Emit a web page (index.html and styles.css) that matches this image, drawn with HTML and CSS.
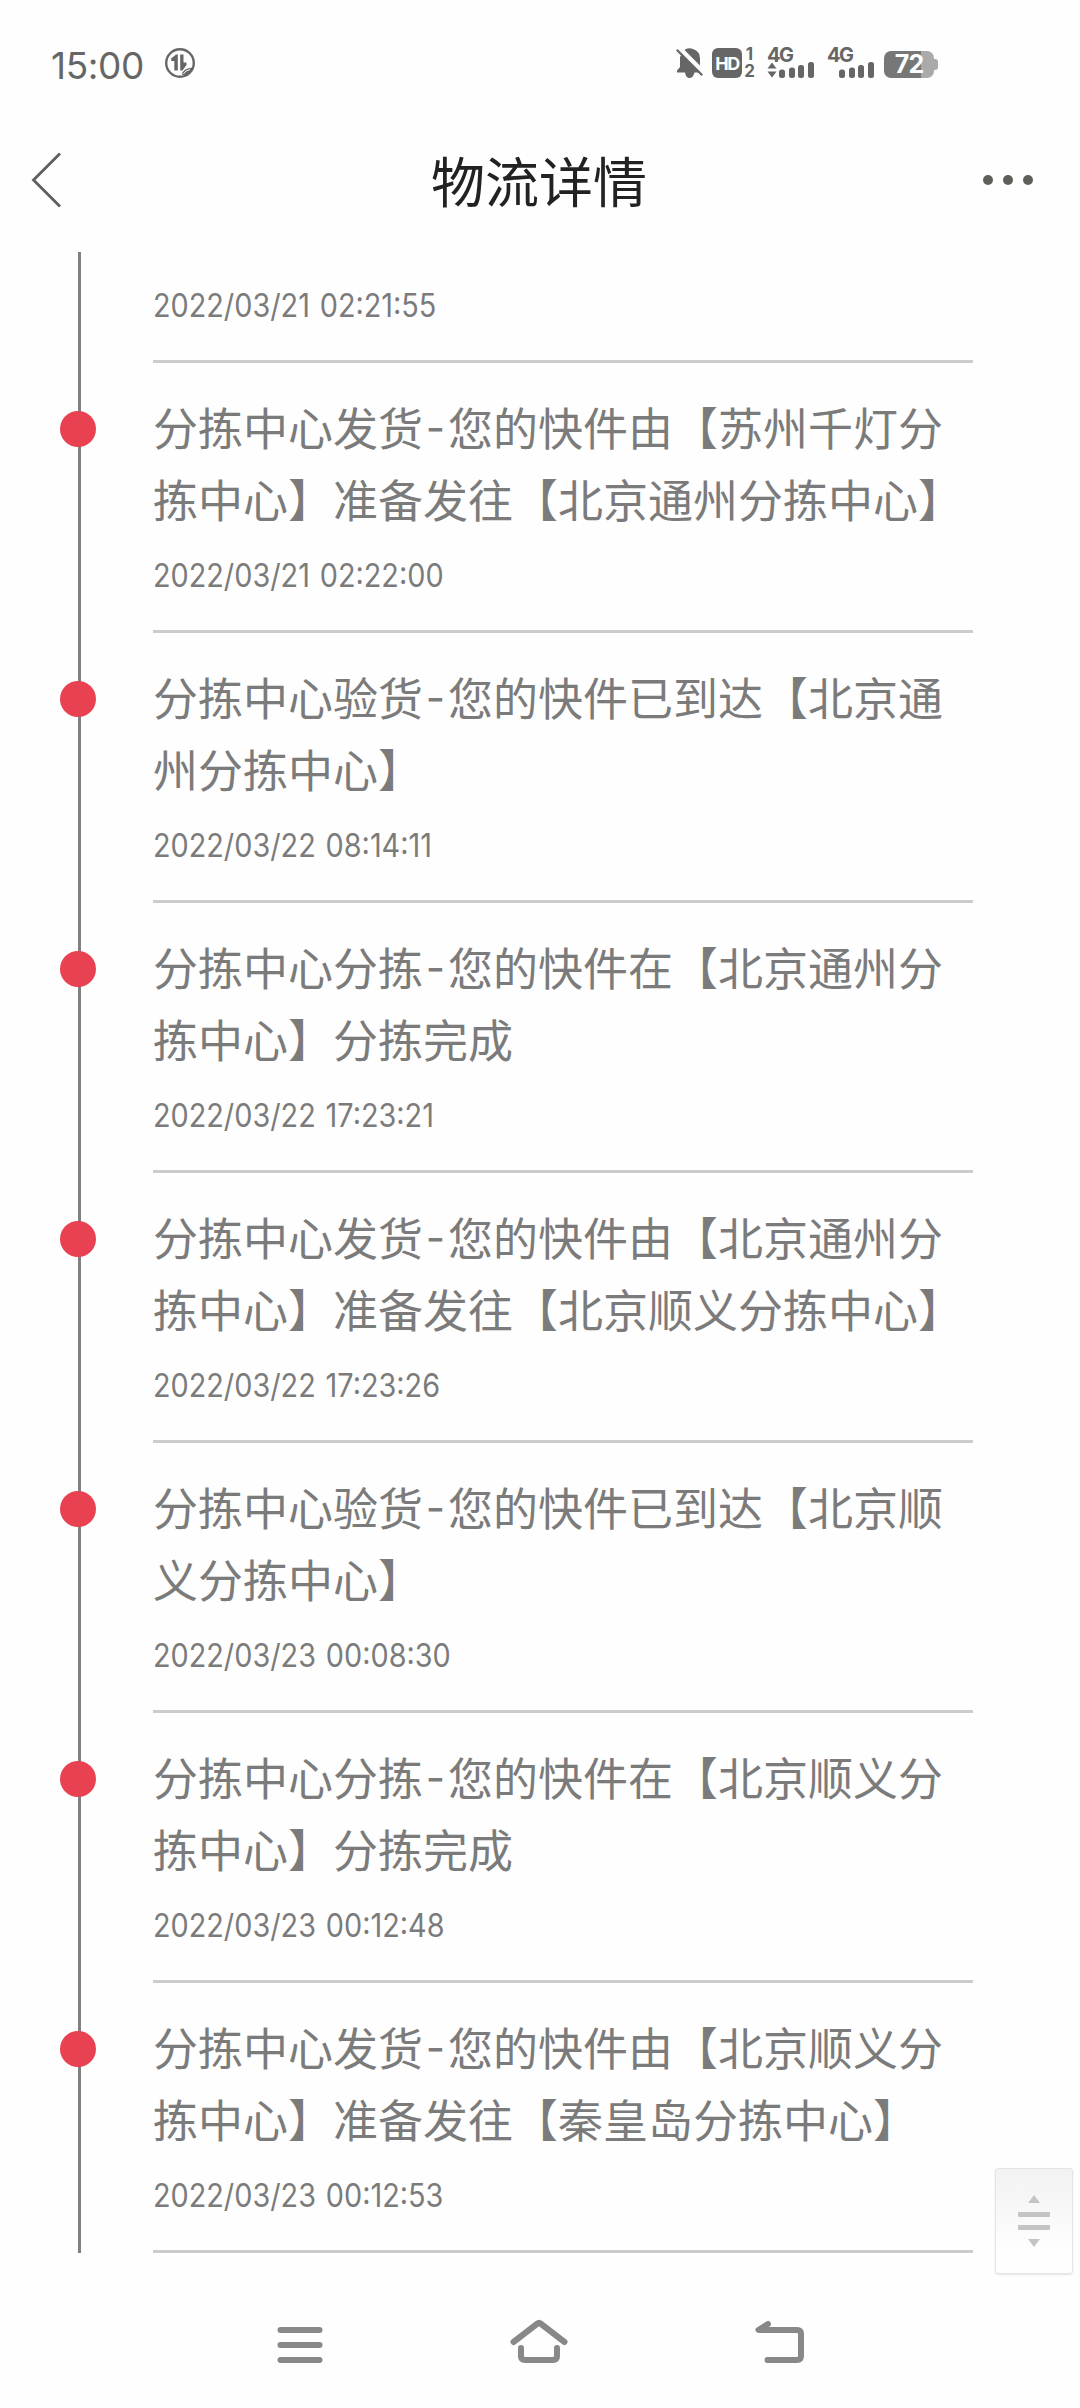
FILE: index.html
```html
<!DOCTYPE html>
<html lang="zh-CN">
<head>
    <meta charset="UTF-8">
    <meta name="viewport" content="width=device-width, initial-scale=1.0">
    <title>物流详情</title>
    <link rel="stylesheet" href="styles.css">
</head>
<body>
    <div class="status-bar">
        <span class="clock">15:00</span>
        <svg class="data-icon" width="30" height="30" viewBox="0 0 30 30">
            <circle cx="15" cy="15" r="13.8" fill="none" stroke="#666" stroke-width="2.4"/>
            <path d="M12.8 22.5H9.3V13H6.2V10.5L11 6.5H12.8ZM15.2 6.5H18.5V14.5H21.5V17L17.5 22.5H15.2Z" fill="#666"/>
            <path d="M17 26.5Q18 20 28 19.5L26 24L21 28Z" fill="#666"/>
            <path d="M18.5 26Q20 22.500 25 21.500" fill="none" stroke="#fefefe" stroke-width="1"/>
        </svg>
        <div class="status-right">
            <svg class="bell" width="28" height="30" viewBox="0 0 28 30">
                <path d="M9 1.500Q13 -.5 17 1Q24 3.500 24 10.500V18L27 24.500H18.500Q17 30 13.500 30Q10 30 9 24.500H1V22.500L4 19V9Z" fill="#666"/>
                <path d="M3 0L28 25" stroke="#fefefe" stroke-width="5"/>
                <path d="M.8 1.800L26.200 27.200" stroke="#666" stroke-width="2.200"/>
            </svg>
            <span class="hd">HD</span>
            <span class="sims"><span>1</span><span>2</span></span>
            <span class="signal signal-1">
                <span class="net">4G</span>
                <svg width="48" height="16" viewBox="0 0 48 16" fill="#666">
                    <path d="M.5 6.500L5 .5L9.500 6.500ZM.5 9.500L5 15.500L9.500 9.500Z"/>
                    <rect x="12" y="7.500" width="6" height="8.500" rx="2.500"/>
                    <rect x="22" y="5.500" width="6" height="10.500" rx="2.500"/>
                    <rect x="31" y="3" width="6" height="13" rx="2.500"/>
                    <rect x="41" y="0" width="6" height="16" rx="2.500"/>
                </svg>
            </span>
            <span class="signal">
                <span class="net">4G</span>
                <svg width="48" height="16" viewBox="0 0 48 16" fill="#666">
                    <rect x="12" y="7.500" width="6" height="8.500" rx="2.500"/>
                    <rect x="22" y="5.500" width="6" height="10.500" rx="2.500"/>
                    <rect x="31" y="3" width="6" height="13" rx="2.500"/>
                    <rect x="41" y="0" width="6" height="16" rx="2.500"/>
                </svg>
            </span>
            <span class="battery"><span>72</span></span>
        </div>
    </div>

    <div class="header">
        <svg class="back" width="30" height="56" viewBox="0 0 30 56">
            <path d="M29 1.500L2.500 28L29 54.500" fill="none" stroke="#5e5e5e" stroke-width="2.800"/>
        </svg>
        <h1>物流详情</h1>
        <div class="more"><i></i><i></i><i></i></div>
    </div>

    <div class="timeline">
        <div class="item item-first">
            <p class="time">2022/03/21 02:21:55</p>
        </div>
        <div class="item">
            <span class="dot"></span>
            <p class="desc">分拣中心发货<span class="dash">-</span>您的快件由【苏州千灯分拣中心】准备发往【北京通州分拣中心】</p>
            <p class="time">2022/03/21 02:22:00</p>
        </div>
        <div class="item">
            <span class="dot"></span>
            <p class="desc">分拣中心验货<span class="dash">-</span>您的快件已到达【北京通州分拣中心】</p>
            <p class="time">2022/03/22 08:14:11</p>
        </div>
        <div class="item">
            <span class="dot"></span>
            <p class="desc">分拣中心分拣<span class="dash">-</span>您的快件在【北京通州分拣中心】分拣完成</p>
            <p class="time">2022/03/22 17:23:21</p>
        </div>
        <div class="item">
            <span class="dot"></span>
            <p class="desc">分拣中心发货<span class="dash">-</span>您的快件由【北京通州分拣中心】准备发往【北京顺义分拣中心】</p>
            <p class="time">2022/03/22 17:23:26</p>
        </div>
        <div class="item">
            <span class="dot"></span>
            <p class="desc">分拣中心验货<span class="dash">-</span>您的快件已到达【北京顺义分拣中心】</p>
            <p class="time">2022/03/23 00:08:30</p>
        </div>
        <div class="item">
            <span class="dot"></span>
            <p class="desc">分拣中心分拣<span class="dash">-</span>您的快件在【北京顺义分拣中心】分拣完成</p>
            <p class="time">2022/03/23 00:12:48</p>
        </div>
        <div class="item">
            <span class="dot"></span>
            <p class="desc">分拣中心发货<span class="dash">-</span>您的快件由【北京顺义分拣中心】准备发往【秦皇岛分拣中心】</p>
            <p class="time">2022/03/23 00:12:53</p>
        </div>
    </div>

    <div class="scroller">
        <svg width="32" height="54" viewBox="0 0 32 54" fill="#c4c4c4">
            <path d="M16 0L22 8H10ZM10 44H22L16 52Z"/>
            <rect x="0" y="17" width="32" height="5" rx="1"/>
            <rect x="0" y="30" width="32" height="5" rx="1"/>
        </svg>
    </div>

    <div class="nav-bar">
        <svg width="46" height="42" viewBox="0 0 46 42">
            <path d="M3.500 10H42.500M3.500 25H42.500M3.500 40H42.500"/>
        </svg>
        <svg width="58" height="42" viewBox="0 0 58 42">
            <path d="M3.500 22L27.500 3.500Q29 2 30.500 3.500L54.500 22M11 28V36Q11 40 15 40H43Q47 40 47 36V28"/>
        </svg>
        <svg width="50" height="42" viewBox="0 0 50 42">
            <path d="M14 4L4.500 10H43Q47 10 47 14V36Q47 40 43 40H13.500"/>
        </svg>
    </div>
</body>
</html>
```
FILE: styles.css
```css
* {
    box-sizing: border-box;
}
body {
    margin: 0;
    height: 2408px;
    display: flex;
    flex-direction: column;
    background-color: #fefefe;
    font-family: "Noto Sans CJK SC", sans-serif;
    overflow: hidden;
    position: relative;
}
svg {
    display: block;
    overflow: visible;
}

/* status bar */
.status-bar {
    display: flex;
    align-items: flex-start;
    height: 126px;
    padding: 48px 142px 0 51px;
    color: #666;
    font-family: Inter, sans-serif;
}
.clock {
    width: 114px;
    font-size: 37px;
    line-height: 35px;
    letter-spacing: -0.4px;
}
.status-right {
    display: flex;
    margin-left: auto;
    height: 30px;
}
.bell {
    margin-right: 8px;
}
.hd {
    width: 30px;
    height: 30px;
    border-radius: 6px;
    background: #666;
    color: #fefefe;
    font-size: 18px;
    font-weight: 700;
    line-height: 31px;
    text-align: center;
    letter-spacing: -1.5px;
}
.sims {
    display: flex;
    flex-direction: column;
    width: 11px;
    margin: 0 12px 0 2px;
    font-size: 17px;
    font-weight: 700;
    line-height: 13px;
    text-align: center;
}
.sims span + span {
    margin-top: 4px;
}
.signal {
    display: flex;
    flex-direction: column;
    justify-content: space-between;
    width: 48px;
    margin-right: 9px;
}
.signal-1 {
    margin-right: 12px;
}
.net {
    height: 14px;
    font-size: 20px;
    font-weight: 700;
    line-height: 14px;
    letter-spacing: -1.5px;
}
.battery {
    position: relative;
    width: 50px;
    height: 27px;
    margin: 3px 4px 0 0;
    border-radius: 7px;
    background: linear-gradient(to right, #777 37px, #aaa 37px);
    color: #fefefe;
    font-size: 25px;
    font-weight: 700;
    line-height: 27px;
    text-align: center;
    letter-spacing: -1px;
}
.battery::after {
    content: "";
    position: absolute;
    left: 50px;
    top: 8px;
    width: 4px;
    height: 11px;
    border-radius: 0 3px 3px 0;
    background: #aaa;
}

/* title bar */
.header {
    display: flex;
    align-items: center;
    justify-content: space-between;
    height: 126px;
    padding: 0 47px 18px 31px;
}
.header h1 {
    margin: 0;
    padding-left: 34px;
    color: #222;
    font-size: 54px;
    font-weight: 400;
    line-height: 80px;
}
.back {
    margin-top: -1px;
}
.more {
    display: flex;
    gap: 10px;
}
.more i {
    width: 10px;
    height: 10px;
    border-radius: 50%;
    background: #5f5f59;
}

/* timeline */
.timeline {
    margin: 0 107px 0 78px;
    padding-left: 72px;
    border-left: 3px solid #808080;
}
.item {
    position: relative;
    height: 270px;
    padding-top: 28px;
    border-bottom: 3px solid #ccc;
    color: #7b7b7b;
}
.item-first {
    height: 111px;
    padding-top: 31px;
}
.dot {
    position: absolute;
    left: -93px;
    top: 48px;
    width: 36px;
    height: 36px;
    border-radius: 50%;
    background: #e84152;
}
.desc {
    margin: 0;
    font-size: 45px;
    line-height: 72px;
    text-spacing-trim: space-all;
}
.dash {
    display: inline-block;
    width: 25px;
    font-family: Inter, sans-serif;
    font-size: 42px;
    line-height: 42px;
    text-align: center;
    vertical-align: 3px;
}
.time {
    width: max-content;
    margin: 18px 0 0;
    font-family: Inter, sans-serif;
    font-size: 32px;
    line-height: 45px;
    word-spacing: 2px;
    transform: scaleX(0.9);
    transform-origin: left;
}
.item-first .time {
    margin-top: 0;
}

/* floating scroll handle */
.scroller {
    position: absolute;
    left: 995px;
    top: 2168px;
    width: 78px;
    height: 106px;
    display: flex;
    justify-content: center;
    padding-top: 26px;
    border: 1px solid #e4e4e4;
    border-radius: 3px;
    background: linear-gradient(#f2f2f2, #fefefe 80%);
    box-shadow: 0 1px 2px rgba(0, 0, 0, 0.1);
}

/* system navigation */
.nav-bar {
    display: flex;
    justify-content: space-between;
    padding: 67px 276px 0 277px;
}
.nav-bar path {
    fill: none;
    stroke: #888;
    stroke-width: 6;
    stroke-linecap: round;
    stroke-linejoin: round;
}
```
